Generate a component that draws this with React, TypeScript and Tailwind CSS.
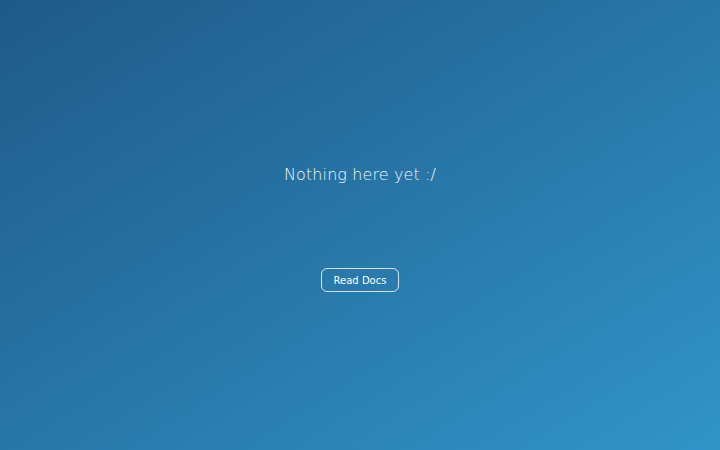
export default function App() {
  return (
    <div
      className="flex h-[450px] w-full flex-col items-center justify-center bg-gradient-to-br from-[#1f5a89] to-[#3194c8] pt-[5px]"
      style={{ fontFamily: '"DejaVu Sans", sans-serif' }}
    >
      <h1 className="mb-[81px] text-[16px] leading-[24px] font-light tracking-[0.1px] text-[#eef6fb]">
        Nothing here yet :/
      </h1>
      <button className="h-[24px] rounded-[6px] border border-white/80 px-[12px] text-[10px] text-white">
        Read Docs
      </button>
    </div>
  );
}
